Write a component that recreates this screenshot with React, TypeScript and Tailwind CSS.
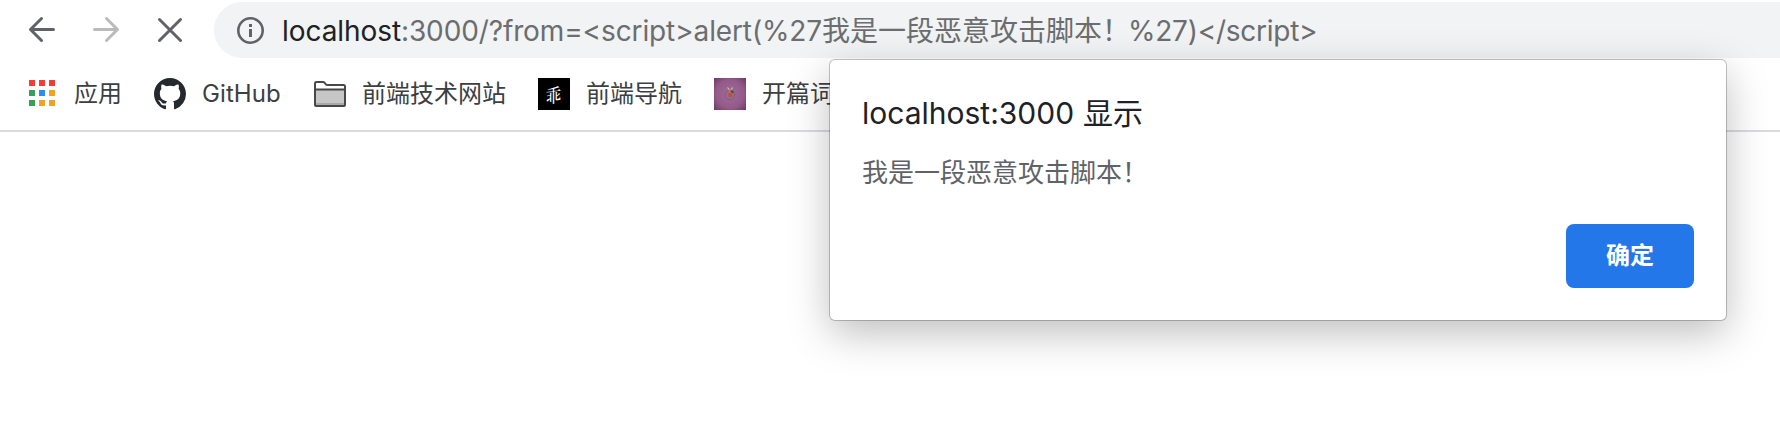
import type { ReactNode } from "react";

const APP_COLORS = [
  "#f53b35", "#f53b35", "#f53b35",
  "#36a05a", "#2a8cf4", "#f0a126",
  "#36a05a", "#f0a126", "#f0a126",
];

function Strokes({ d, color }: { d: string; color: string }) {
  return (
    <svg width="28" height="28" viewBox="0 0 28 28" fill="none" stroke={color} strokeWidth="3" strokeLinecap="round" strokeLinejoin="round">
      <path d={d} />
    </svg>
  );
}

function AppsIcon() {
  return (
    <div className="mb-0.5 grid w-[26px] grid-cols-3 gap-1">
      {APP_COLORS.map((c, i) => (
        <span key={i} className="h-1.5 w-1.5" style={{ backgroundColor: c }} />
      ))}
    </div>
  );
}

function GitHubIcon() {
  return (
    <svg width="32" height="32" viewBox="0 0 16 16" fill="#24292e">
      <path fillRule="evenodd" d="M8 0C3.58 0 0 3.58 0 8c0 3.54 2.29 6.53 5.47 7.59.4.07.55-.17.55-.38 0-.19-.01-.82-.01-1.49-2.01.37-2.53-.49-2.69-.94-.09-.23-.48-.94-.82-1.13-.28-.15-.68-.52-.01-.53.63-.01 1.08.58 1.23.82.72 1.21 1.87.87 2.33.66.07-.52.28-.87.51-1.07-1.78-.2-3.64-.89-3.64-3.95 0-.87.31-1.59.82-2.15-.08-.2-.36-1.02.08-2.12 0 0 .67-.21 2.2.82.64-.18 1.32-.27 2-.27s1.36.09 2 .27c1.53-1.04 2.2-.82 2.2-.82.44 1.1.16 1.92.08 2.12.51.56.82 1.27.82 2.15 0 3.07-1.87 3.75-3.65 3.95.29.25.54.73.54 1.48 0 1.07-.01 1.93-.01 2.2 0 .21.15.46.55.38A8.01 8.01 0 0 0 16 8c0-4.42-3.58-8-8-8z" />
    </svg>
  );
}

function FolderIcon() {
  return (
    <svg width="32" height="26" viewBox="0 0 32 26">
      <path d="M1 24V2.5Q1 1 2.5 1H9Q10 1 10.8 2L12 3.5Q12.500 4 13.500 4H29.500Q31 4 31 5.500V24Q31 25 30 25H2Q1 25 1 24Z" fill="#fff" />
      <path d="M1 8H31V25H1Z" fill="#c6c6c6" />
      <path d="M2 23H30" stroke="#a9a9a9" strokeWidth="2" />
      <path d="M1 8.500H31M1 24V2.500Q1 1 2.500 1H9Q10 1 10.800 2L12 3.500Q12.500 4 13.500 4H29.500Q31 4 31 5.500V24Q31 25 30 25H2Q1 25 1 24Z" fill="none" stroke="#484848" strokeWidth="2" />
    </svg>
  );
}

function PurpleIcon() {
  return (
    <svg width="32" height="32" viewBox="0 0 32 32">
      <defs>
        <radialGradient id="plum" r="0.72">
          <stop offset="0" stopColor="#a26a99" />
          <stop offset="0.6" stopColor="#935b89" />
          <stop offset="1" stopColor="#6a3761" />
        </radialGradient>
      </defs>
      <rect width="32" height="32" fill="url(#plum)" />
      <circle cx="16" cy="17" r="4.700" fill="none" stroke="#776770" strokeWidth="1" />
      <rect x="14.300" y="15" width="4" height="4" rx="1" fill="#c2502f" />
      <path d="M13.500 9.500L15.500 12M18.500 9.500L17 12" stroke="#d4c8a0" strokeWidth="1.200" />
      <path d="M14.500 11.500H18V14H14.500Z" fill="#99805f" />
      <path d="M17 13L19.500 14.500" stroke="#51402e" strokeWidth="1.500" />
    </svg>
  );
}

function Bookmark({ icon, label, className }: { icon: ReactNode; label: string; className: string }) {
  return (
    <div className={`flex h-8 shrink-0 items-center ${className}`}>
      {icon}
      <span className="leading-8">{label}</span>
    </div>
  );
}

export default function App() {
  return (
    <div className="relative h-[428px] w-[1780px] overflow-hidden bg-white font-['Inter','Noto_Sans_CJK_SC',sans-serif] whitespace-nowrap">
      <header className="h-[132px] border-b-2 border-[#dadae0]">
        <div className="flex h-[60px] items-center pl-7">
          <Strokes color="#5f6368" d="M25.500 13.500H2.500M13.500 2.500L2.500 13.500L13.500 24.500" />
          <div className="ml-9">
            <Strokes color="#bbbbbd" d="M2.500 13.500H25.500M14.500 2.500L25.500 13.500L14.500 24.500" />
          </div>
          <div className="ml-9">
            <Strokes color="#5f6368" d="M3.500 3.500L24.500 24.500M24.500 3.500L3.500 24.500" />
          </div>
          <div className="ml-[30px] flex h-14 flex-1 items-center rounded-l-full bg-[#f1f3f4] pl-[23px]">
            <svg width="27" height="27" viewBox="0 0 27 27" fill="none">
              <circle cx="13.500" cy="13.500" r="12.200" stroke="#5f6368" strokeWidth="2.600" />
              <path d="M13.500 12V20M13.500 7V10" stroke="#5f6368" strokeWidth="3" />
            </svg>
            <div className="ml-[18px] flex pt-px text-[28px] leading-14 text-[#6b6d6f]">
              <span className="w-[119px] tracking-[-0.050px] text-[#202124]">localhost</span>
              <span className="w-[421px] tracking-[-0.120px]">:3000/?from=&lt;script&gt;alert(%27</span>
              <span className="w-[306px]">我是一段恶意攻击脚本！</span>
              <span className="tracking-[-0.250px]">%27)&lt;/script&gt;</span>
            </div>
          </div>
        </div>
        <nav className="flex h-[68px] items-center pl-[29px] text-2xl text-[#3c4043]">
          <Bookmark icon={<AppsIcon />} label="应用" className="w-[125px] gap-[19px]" />
          <Bookmark icon={<GitHubIcon />} label="GitHub" className="w-[160px] gap-4 tracking-[0.100px]" />
          <Bookmark icon={<FolderIcon />} label="前端技术网站" className="w-[224px] gap-4" />
          <Bookmark
            icon={
              <span className="flex h-8 w-8 items-center justify-center bg-black font-['Noto_Serif_CJK_SC','Noto_Sans_CJK_SC',serif] text-[15px] leading-none font-medium text-white">
                <span className="scale-y-125 -skew-y-6">乖</span>
              </span>
            }
            label="前端导航"
            className="w-[176px] gap-4"
          />
          <Bookmark icon={<PurpleIcon />} label="开篇词" className="gap-4" />
        </nav>
      </header>

      <section
        role="dialog"
        className="absolute top-[60px] left-[830px] flex h-[260px] w-[896px] flex-col rounded-[5px] bg-white px-8 shadow-[0_0_0_1px_rgba(0,0,0,0.220),0_13px_42px_rgba(0,0,0,0.260)]"
      >
        <h1 className="mt-[31px] flex text-[30px] leading-[44px] text-[#202124]">
          <span className="w-[221px]">localhost:3000</span>
          <span>显示</span>
        </h1>
        <p className="mt-[18px] text-[26px] leading-10 text-[#5f6368]">我是一段恶意攻击脚本！</p>
        <button className="mt-[31px] h-16 w-32 self-end rounded-lg bg-[#2377e8] text-2xl font-bold text-white">确定</button>
      </section>
    </div>
  );
}
